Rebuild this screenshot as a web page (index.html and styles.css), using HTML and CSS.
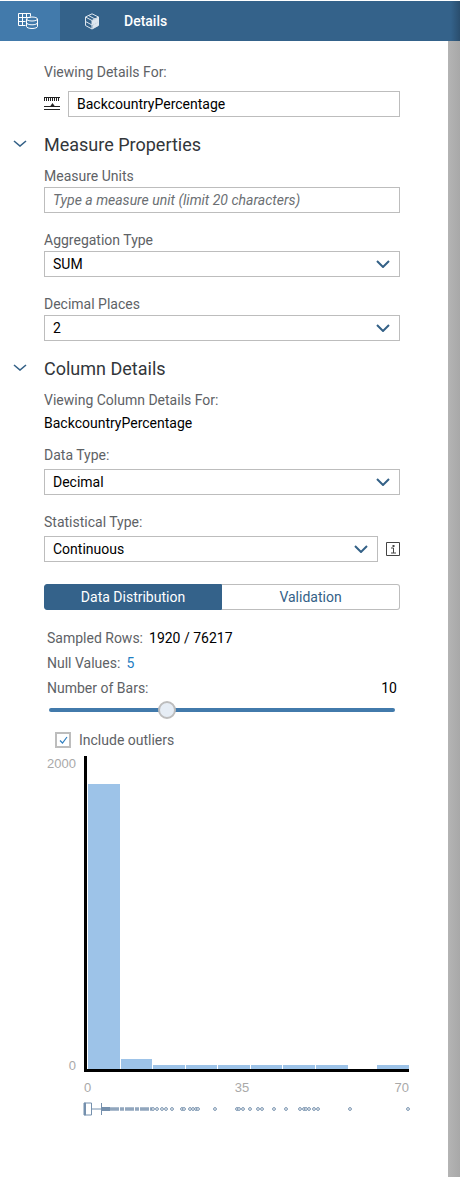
FILE: index.html
```html
<!DOCTYPE html>
<html lang="en">
<head>
    <meta charset="UTF-8">
    <meta name="viewport" content="width=device-width, initial-scale=1.0">
    <title>Details</title>
    <link rel="stylesheet" href="styles.css">
</head>
<body>
    <div class="topbar">
        <div class="tab tab-active">
            <svg class="tab-icon" width="20" height="16" viewBox="0 0 20 16" fill="none" stroke="#fff" stroke-width="1">
                <path d="M7.500 12.500h-7V.5h12v3M.5 4.500h12M.5 8.500h7M4.500.5v12M8.500.5v3.500"/>
                <ellipse cx="14" cy="6" rx="5.500" ry="2"/>
                <path d="M8.500 6v7.500c0 1.100 2.500 2 5.500 2s5.500-.9 5.500-2V6M8.500 9.800c0 1.100 2.500 2 5.500 2s5.500-.9 5.500-2"/>
            </svg>
        </div>
        <div class="tab">
            <svg class="tab-icon" width="16" height="17" viewBox="0 0 16 17" fill="none" stroke="#dfe7ef" stroke-width="1">
                <path d="M8 .8l6.500 3.200v8.500L8 16l-6.500-3.500V4zM1.500 4L8 7.500 14.500 4M8 7.500V16M4.500 2.500l6.500 3.500M1.500 8.500L8 12l6.500-3.500"/>
                <path d="M8.500 8l5.500-3v3.500L8.500 11.500zM9 12.500l5-3v2.800L9 15z" fill="#dfe7ef"/>
            </svg>
            <span class="tab-title">Details</span>
        </div>
    </div>

    <div class="layout">
        <div class="panel">
            <div class="field field-first">
                <div class="label">Viewing Details For:</div>
                <div class="name-row">
                    <svg width="16" height="14" viewBox="0 0 16 14" fill="none" stroke="#222" stroke-width="1">
                        <path d="M0 .5h16M.5 0v4M2.500 0v4M4.500 0v4M6.500 0v4M8.500 0v4M10.500 0v4M12.500 0v4M14.500 0v4M0 9.500h16M0 12.500h16"/>
                        <path d="M6 9.500l2.500-3.500 2.500 3.500z" fill="#222" stroke="none"/>
                    </svg>
                    <div class="input">BackcountryPercentage</div>
                </div>
            </div>

            <div class="section-head">
                <svg class="chevron-big" width="14" height="7" viewBox="0 0 14 7" fill="none" stroke="#346187" stroke-width="1.600"><path d="M1 1l6 5 6-5"/></svg>
                <h2>Measure Properties</h2>
            </div>
            <div class="field field-units">
                <div class="label">Measure Units</div>
                <div class="input input-placeholder">Type a measure unit (limit 20 characters)</div>
            </div>
            <div class="field field-select">
                <div class="label">Aggregation Type</div>
                <div class="input select">SUM
                    <svg width="14" height="8" viewBox="0 0 14 8" fill="none" stroke="#346187" stroke-width="2"><path d="M1 1l6 6 6-6"/></svg>
                </div>
            </div>
            <div class="field field-select">
                <div class="label">Decimal Places</div>
                <div class="input select">2
                    <svg width="14" height="8" viewBox="0 0 14 8" fill="none" stroke="#346187" stroke-width="2"><path d="M1 1l6 6 6-6"/></svg>
                </div>
            </div>

            <div class="section-head">
                <svg class="chevron-big" width="14" height="7" viewBox="0 0 14 7" fill="none" stroke="#346187" stroke-width="1.600"><path d="M1 1l6 5 6-5"/></svg>
                <h2>Column Details</h2>
            </div>
            <div class="field field-column">
                <div class="label">Viewing Column Details For:</div>
                <div class="value">BackcountryPercentage</div>
            </div>
            <div class="field field-type">
                <div class="label">Data Type:</div>
                <div class="input select">Decimal
                    <svg width="14" height="8" viewBox="0 0 14 8" fill="none" stroke="#346187" stroke-width="2"><path d="M1 1l6 6 6-6"/></svg>
                </div>
            </div>
            <div class="field field-stat">
                <div class="label">Statistical Type:</div>
                <div class="stat-row">
                    <div class="input select">Continuous
                        <svg width="14" height="8" viewBox="0 0 14 8" fill="none" stroke="#346187" stroke-width="2"><path d="M1 1l6 6 6-6"/></svg>
                    </div>
                    <svg width="14" height="14" viewBox="0 0 14 14" fill="none" stroke="#444" stroke-width="1">
                        <path d="M.5.5h13v13H.5zM5 6h2.500v5M5 11h5"/>
                        <path d="M6.500 3h2v2h-2z" fill="#444" stroke="none"/>
                    </svg>
                </div>
            </div>

            <div class="segmented">
                <div class="segment segment-on">Data Distribution</div>
                <div class="segment">Validation</div>
            </div>

            <div class="stats">
                <div class="stat-line"><span class="stat-key">Sampled Rows:</span><span>1920 / 76217</span></div>
                <div class="stat-line"><span class="stat-key">Null Values:</span><span class="stat-link">5</span></div>
                <div class="stat-line stat-spread"><span class="stat-key">Number of Bars:</span><span>10</span></div>
            </div>

            <div class="slider"><div class="slider-thumb"></div></div>

            <label class="check">
                <span class="check-box">
                    <svg width="9" height="8" viewBox="0 0 9 8" fill="none" stroke="#2f7fc0" stroke-width="1.200"><path d="M1 4.500l2.500 2.500L8 1"/></svg>
                </span>
                Include outliers
            </label>

            <svg class="chart" width="412" height="373" viewBox="0 0 412 373">
                <g fill="#9dc3e8">
                    <rect x="88" y="29" width="32" height="285"/>
                    <rect x="121" y="304" width="31" height="10"/>
                    <rect x="153" y="310" width="32" height="4"/>
                    <rect x="186" y="310" width="31" height="4"/>
                    <rect x="218" y="310" width="32" height="4"/>
                    <rect x="251" y="310" width="31" height="4"/>
                    <rect x="283" y="310" width="32" height="4"/>
                    <rect x="316" y="310" width="32" height="4"/>
                    <rect x="377" y="310" width="32" height="4"/>
                </g>
                <path d="M84 1h3v313h322v3H84z" fill="#000"/>
                <g class="tick">
                    <text x="76" y="13" text-anchor="end">2000</text>
                    <text x="76" y="315" text-anchor="end">0</text>
                    <text x="84" y="337">0</text>
                    <text x="242" y="337" text-anchor="middle">35</text>
                    <text x="409" y="337" text-anchor="end">70</text>
                </g>
                <g fill="none" stroke="#7590ad">
                    <path d="M84.500 348v12h7v-12zM92 354h10M101.500 348v12"/>
                    <path d="M84 348h1.500v12H84z" fill="#7590ad"/>
                    <path d="M102 354h8" stroke-width="4"/>
                    <path d="M110 354h42" stroke-width="3.500" stroke-opacity=".8" stroke-dasharray="9 1 4 1"/>
                </g>
                <g fill="#fff" stroke="#7590ad" stroke-width="1">
                    <circle cx="153" cy="354" r="1.400"/><circle cx="157" cy="354" r="1.400"/>
                    <circle cx="162" cy="354" r="1.400"/><circle cx="166" cy="354" r="1.400"/>
                    <circle cx="172" cy="354" r="1.400"/><circle cx="182" cy="354" r="1.400"/>
                    <circle cx="184" cy="354" r="1.400"/><circle cx="190" cy="354" r="1.400"/>
                    <circle cx="193" cy="354" r="1.400"/><circle cx="196" cy="354" r="1.400"/>
                    <circle cx="198" cy="354" r="1.400"/><circle cx="215" cy="354" r="1.400"/>
                    <circle cx="237" cy="354" r="1.400"/><circle cx="239" cy="354" r="1.400"/>
                    <circle cx="243" cy="354" r="1.400"/><circle cx="250" cy="354" r="1.400"/>
                    <circle cx="258" cy="354" r="1.400"/><circle cx="262" cy="354" r="1.400"/>
                    <circle cx="274" cy="354" r="1.400"/><circle cx="286" cy="354" r="1.400"/>
                    <circle cx="300" cy="354" r="1.400"/><circle cx="304" cy="354" r="1.400"/>
                    <circle cx="306" cy="354" r="1.400"/><circle cx="309" cy="354" r="1.400"/>
                    <circle cx="314" cy="354" r="1.400"/><circle cx="318" cy="354" r="1.400"/>
                    <circle cx="350" cy="354" r="1.400"/><circle cx="408" cy="354" r="1.400"/>
                </g>
            </svg>
        </div>
        <div class="scrollbar"></div>
    </div>
</body>
</html>
```

FILE: styles.css
```css
html, body {
    margin: 0;
    height: 1177px;
    overflow: hidden;
    background: #fff;
    color: #000;
    font-family: Roboto, sans-serif;
    font-size: 14px;
}
.topbar {
    display: flex;
    height: 40px;
    margin-top: 1px;
    background: linear-gradient(to right, #34628a 98%, #2a4e6e);
}
.tab {
    display: flex;
    align-items: center;
}
.tab-active {
    width: 60px;
    justify-content: center;
    background: #427aab;
}
.tab-active .tab-icon {
    margin-left: -4px;
}
.tab:not(.tab-active) {
    padding-left: 24px;
}
.tab-title {
    margin-left: 24px;
    color: #fff;
    font-weight: 500;
    font-size: 14px;
}
.layout {
    display: flex;
    height: 1136px;
}
.panel {
    width: 448px;
    box-sizing: border-box;
    padding: 0 48px 0 44px;
}
.scrollbar {
    width: 12px;
    background: linear-gradient(to right, #b4b4b4, #a8a8a8);
}
.label {
    height: 20px;
    line-height: 20px;
    color: #5e6266;
}
.field-first {
    padding-top: 21px;
}
.name-row {
    display: flex;
    align-items: center;
    gap: 8px;
    margin-top: 9px;
}
.name-row .input {
    flex: 1;
}
.input {
    box-sizing: border-box;
    height: 26px;
    line-height: 24px;
    padding: 0 8px;
    border: 1px solid #bdbdbd;
    background: #fff;
}
.input-placeholder {
    font-style: italic;
    color: #6b6f73;
}
.select {
    display: flex;
    align-items: center;
    justify-content: space-between;
    padding-right: 9px;
}
.section-head {
    position: relative;
    display: flex;
    align-items: center;
    height: 26px;
    margin-top: 14px;
}
.section-head h2 {
    margin: 0;
    font-size: 18px;
    font-weight: 400;
    color: #32363a;
}
.chevron-big {
    position: absolute;
    left: -31px;
    top: 9px;
}
.field-units {
    padding-top: 9px;
}
.field-units .label {
    margin-bottom: 1px;
}
.field-select {
    padding-top: 17px;
}
.field-select .label {
    margin-bottom: 1px;
}
.field-column {
    padding-top: 9px;
}
.value {
    height: 20px;
    line-height: 20px;
    margin-top: 3px;
}
.field-type {
    padding-top: 12px;
}
.field-type .label {
    margin-bottom: 4px;
}
.field-stat {
    padding-top: 17px;
}
.field-stat .label {
    margin-bottom: 4px;
}
.stat-row {
    display: flex;
    align-items: center;
    gap: 8px;
}
.stat-row .input {
    flex: 1;
}
.segmented {
    display: flex;
    height: 26px;
    margin-top: 22px;
}
.segment {
    flex: 1;
    box-sizing: border-box;
    line-height: 24px;
    text-align: center;
    color: #346187;
    border: 1px solid #bdbdbd;
    border-left: 0;
    border-radius: 0 3px 3px 0;
}
.segment-on {
    flex: none;
    width: 178px;
    background: #34628a;
    color: #fff;
    border: 1px solid #34628a;
    border-radius: 3px 0 0 3px;
}
.stats {
    padding: 16px 3px 0 3px;
}
.stat-line {
    display: flex;
    gap: 6px;
    height: 25px;
    line-height: 25px;
}
.stat-spread {
    justify-content: space-between;
}
.stat-key {
    color: #5e6266;
}
.stat-link {
    color: #1f7ec2;
}
.slider {
    position: relative;
    height: 4px;
    margin: 7px 5px 0;
    border-radius: 2px;
    background: #427aab;
}
.slider-thumb {
    position: absolute;
    left: 109px;
    top: -7px;
    box-sizing: border-box;
    width: 18px;
    height: 18px;
    border: 2px solid #bdbdbd;
    border-radius: 50%;
    background: #e6edf5;
}
.check {
    display: flex;
    align-items: center;
    gap: 8px;
    height: 20px;
    margin: 18px 0 0 11px;
    color: #5e6266;
}
.check-box {
    display: flex;
    align-items: center;
    justify-content: center;
    box-sizing: border-box;
    width: 16px;
    height: 16px;
    border: 2px solid #bdbdbd;
}
.chart {
    display: block;
    margin: 5px 0 0 -44px;
}
.tick text {
    font-family: "Liberation Sans", sans-serif;
    font-size: 13px;
    fill: #a9a9a9;
}
```
